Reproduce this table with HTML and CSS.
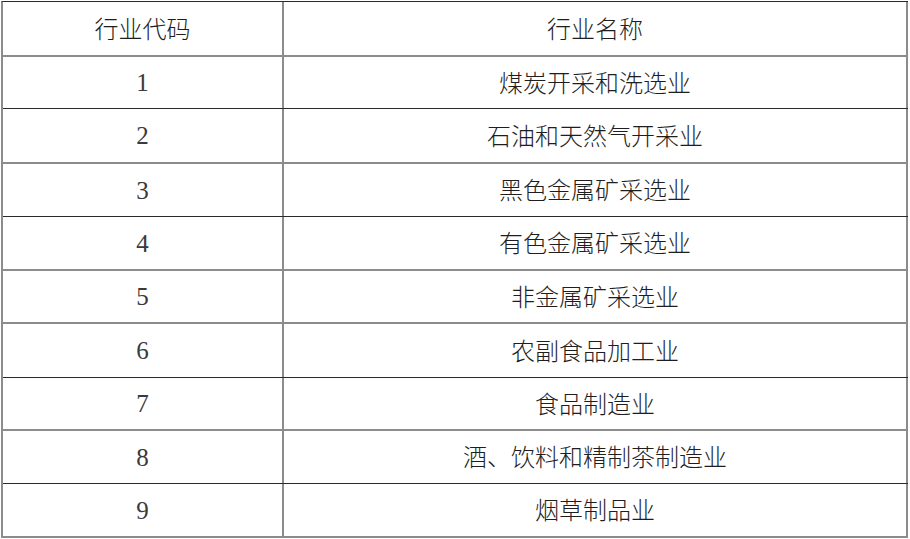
FILE: index.html
```html
<!DOCTYPE html>
<html lang="zh-CN">
<head>
<meta charset="utf-8">
<title>行业代码</title>
<link rel="stylesheet" href="styles.css">
</head>
<body>
<div class="table">
  <div class="row gray h55"><div class="cell code">行业代码</div><div class="cell name">行业名称</div></div>
  <div class="row dark h52"><div class="cell code num">1</div><div class="cell name">煤炭开采和洗选业</div></div>
  <div class="row gray h55"><div class="cell code num">2</div><div class="cell name">石油和天然气开采业</div></div>
  <div class="row dark h53"><div class="cell code num">3</div><div class="cell name">黑色金属矿采选业</div></div>
  <div class="row gray h54"><div class="cell code num">4</div><div class="cell name">有色金属矿采选业</div></div>
  <div class="row gray h53"><div class="cell code num">5</div><div class="cell name">非金属矿采选业</div></div>
  <div class="row dark h54"><div class="cell code num">6</div><div class="cell name">农副食品加工业</div></div>
  <div class="row gray h53"><div class="cell code num">7</div><div class="cell name">食品制造业</div></div>
  <div class="row dark h53"><div class="cell code num">8</div><div class="cell name">酒、饮料和精制茶制造业</div></div>
  <div class="row gray h54"><div class="cell code num">9</div><div class="cell name">烟草制品业</div></div>
</div>
</body>
</html>
```
FILE: styles.css
```css
html, body {
  margin: 0;
  padding: 0;
  background: #ffffff;
}

body {
  padding: 1px 0 0 1px;
  font-family: "Noto Sans CJK SC", "Noto Sans", sans-serif;
  font-weight: 300;
  font-size: 24px;
  color: #1e1e1e;
}

.table {
  width: 907px;
  box-sizing: border-box;
  border-top: 1px solid #2a2a2a;
  border-left: 2px solid #8c8c8c;
}

.row {
  display: grid;
  grid-template-columns: 281px 1fr;
  box-sizing: border-box;
}

.row.gray { border-bottom: 2px solid #8c8c8c; }
.row.dark { border-bottom: 1px solid #2a2a2a; }

.h52 { height: 52px; }
.h53 { height: 53px; }
.h54 { height: 54px; }
.h55 { height: 55px; }

.cell {
  display: flex;
  align-items: center;
  justify-content: center;
  border-right: 2px solid #8c8c8c;
  line-height: 1;
  padding-bottom: 2px;
}

.num {
  font-family: "Liberation Serif", serif;
  font-weight: 400;
  font-size: 25px;
  color: #3a3a3a;
  padding-bottom: 0;
}
```
